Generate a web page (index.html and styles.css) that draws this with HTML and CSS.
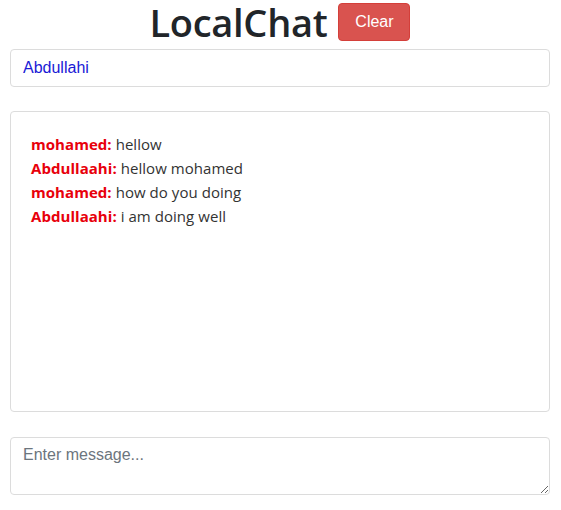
FILE: index.html
```html
<!DOCTYPE html>
<html>
<head>
<meta charset="utf-8">
<link rel="stylesheet" href="styles.css">
</head>
<body>
<div class="container">
  <header class="header">
    <h1 class="title">LocalChat</h1>
    <button class="btn-clear">Clear</button>
  </header>
  <input class="name-input" type="text" value="Abdullahi">
  <div class="chat-box">
    <div class="msg"><span class="who">mohamed:</span> hellow</div>
    <div class="msg"><span class="who">Abdullaahi:</span> hellow mohamed</div>
    <div class="msg"><span class="who">mohamed:</span> how do you doing</div>
    <div class="msg"><span class="who">Abdullaahi:</span> i am doing well</div>
  </div>
  <textarea class="message-input" placeholder="Enter message..."></textarea>
</div>
</body>
</html>
```
FILE: styles.css
```css
* { box-sizing: border-box; }
html, body { margin: 0; padding: 0; background: #fff; }
body { font-family: "Open Sans", "Noto Sans", sans-serif; color: #212529; }
.container { padding: 0 11px 0 10px; display: flex; flex-direction: column; }
.header { display: flex; justify-content: center; align-items: center; gap: 11px; height: 44px; }
.title { margin: 0; font-family: "Open Sans", sans-serif; font-weight: 600; font-size: 38px; line-height: 44px; color: #212529; letter-spacing: -0.3px; }
.btn-clear { background: #d9534f; color: #fff; border: 1px solid #d43f3a; border-radius: 4px; font-family: "Liberation Sans", Arial, sans-serif; font-size: 16px; width: 72px; height: 38px; padding: 0; }
.name-input { margin-top: 5px; height: 38px; width: 100%; border: 1px solid #dcdcdc; border-radius: 4px; padding: 0 12px; font-family: "Liberation Sans", Arial, sans-serif; font-size: 16px; color: #1a1ad6; outline: none; }
.chat-box { margin-top: 24px; height: 301px; border: 1px solid #dcdcdc; border-radius: 4px; padding: 20px 20px; font-family: "Open Sans", sans-serif; font-size: 15px; line-height: 24px; color: #333; letter-spacing: 0.05px; }
.who { color: #e8000b; font-weight: 700; }
.message-input { margin-top: 25px; height: 58px; width: 100%; border: 1px solid #dcdcdc; border-radius: 4px; padding: 8px 12px; font-family: "Liberation Sans", Arial, sans-serif; font-size: 16px; resize: vertical; outline: none; }
.message-input::placeholder { color: #6c757d; }
```
